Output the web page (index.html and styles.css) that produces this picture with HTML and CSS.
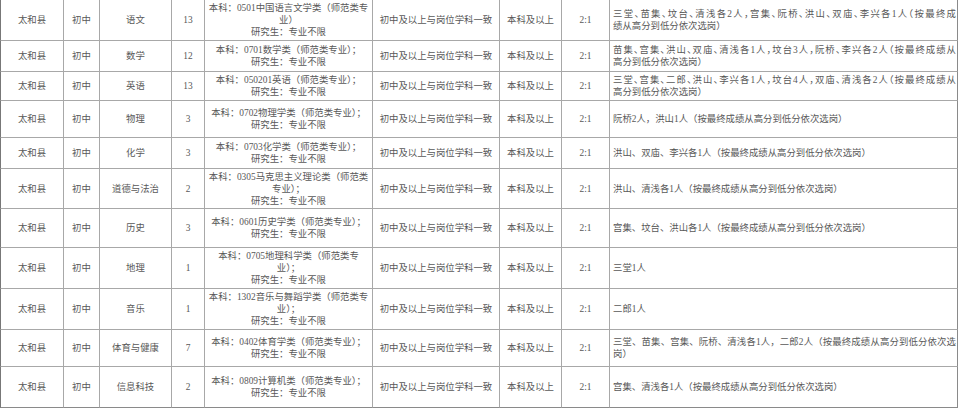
FILE: index.html
```html
<!DOCTYPE html>
<html lang="zh-CN">
<head>
<meta charset="utf-8">
<title>岗位计划表</title>
<link rel="stylesheet" href="styles.css">
</head>
<body>
<table class="roster">
  <colgroup>
    <col class="c-county">
    <col class="c-stage">
    <col class="c-subject">
    <col class="c-count">
    <col class="c-major">
    <col class="c-cert">
    <col class="c-edu">
    <col class="c-ratio">
    <col class="c-note">
  </colgroup>
  <tbody>
    <tr class="h41">
      <td>太和县</td><td>初中</td><td>语文</td><td>13</td>
      <td>本科：0501中国语言文学类（师范类专业）<br>研究生：专业不限</td>
      <td>初中及以上与岗位学科一致</td><td>本科及以上</td><td>2:1</td>
      <td><span class="line trim">三堂、苗集、坟台、清浅各2人，宫集、阮桥、洪山、双庙、李兴各1人（按最终成</span>绩从高分到低分依次选岗）</td>
    </tr>
    <tr class="h31">
      <td>太和县</td><td>初中</td><td>数学</td><td>12</td>
      <td>本科：0701数学类（师范类专业）；<br>研究生：专业不限</td>
      <td>初中及以上与岗位学科一致</td><td>本科及以上</td><td>2:1</td>
      <td><span class="line trim">苗集、宫集、洪山、双庙、清浅各1人，坟台3人，阮桥、李兴各2人（按最终成绩从</span>高分到低分依次选岗）</td>
    </tr>
    <tr class="h29">
      <td>太和县</td><td>初中</td><td>英语</td><td>13</td>
      <td>本科：050201英语（师范类专业）；<br>研究生：专业不限</td>
      <td>初中及以上与岗位学科一致</td><td>本科及以上</td><td>2:1</td>
      <td><span class="line trim">三堂、宫集、二郎、洪山、李兴各1人，坟台4人，双庙、清浅各2人（按最终成绩从</span>高分到低分依次选岗）</td>
    </tr>
    <tr class="h37">
      <td>太和县</td><td>初中</td><td>物理</td><td>3</td>
      <td>本科：0702物理学类（师范类专业）；<br>研究生：专业不限</td>
      <td>初中及以上与岗位学科一致</td><td>本科及以上</td><td>2:1</td>
      <td>阮桥2人，洪山1人（按最终成绩从高分到低分依次选岗）</td>
    </tr>
    <tr class="h31">
      <td>太和县</td><td>初中</td><td>化学</td><td>3</td>
      <td>本科：0703化学类（师范类专业）；<br>研究生：专业不限</td>
      <td>初中及以上与岗位学科一致</td><td>本科及以上</td><td>2:1</td>
      <td>洪山、双庙、李兴各1人（按最终成绩从高分到低分依次选岗）</td>
    </tr>
    <tr class="h40">
      <td>太和县</td><td>初中</td><td>道德与法治</td><td>2</td>
      <td>本科：0305马克思主义理论类（师范类专业）；<br>研究生：专业不限</td>
      <td>初中及以上与岗位学科一致</td><td>本科及以上</td><td>2:1</td>
      <td>洪山、清浅各1人（按最终成绩从高分到低分依次选岗）</td>
    </tr>
    <tr class="h39">
      <td>太和县</td><td>初中</td><td>历史</td><td>3</td>
      <td>本科：0601历史学类（师范类专业）；<br>研究生：专业不限</td>
      <td>初中及以上与岗位学科一致</td><td>本科及以上</td><td>2:1</td>
      <td>宫集、坟台、洪山各1人（按最终成绩从高分到低分依次选岗）</td>
    </tr>
    <tr class="h41">
      <td>太和县</td><td>初中</td><td>地理</td><td>1</td>
      <td>本科：0705地理科学类（师范类专业）；<br>研究生：专业不限</td>
      <td>初中及以上与岗位学科一致</td><td>本科及以上</td><td>2:1</td>
      <td>三堂1人</td>
    </tr>
    <tr class="h41">
      <td>太和县</td><td>初中</td><td>音乐</td><td>1</td>
      <td>本科：1302音乐与舞蹈学类（师范类专业）；<br>研究生：专业不限</td>
      <td>初中及以上与岗位学科一致</td><td>本科及以上</td><td>2:1</td>
      <td>二郎1人</td>
    </tr>
    <tr class="h37">
      <td>太和县</td><td>初中</td><td>体育与健康</td><td>7</td>
      <td>本科：0402体育学类（师范类专业）；<br>研究生：专业不限</td>
      <td>初中及以上与岗位学科一致</td><td>本科及以上</td><td>2:1</td>
      <td><span class="line">三堂、苗集、宫集、阮桥、清浅各1人，二郎2人（按最终成绩从高分到低分依次选</span>岗）</td>
    </tr>
    <tr class="h41">
      <td>太和县</td><td>初中</td><td>信息科技</td><td>2</td>
      <td>本科：0809计算机类（师范类专业）；<br>研究生：专业不限</td>
      <td>初中及以上与岗位学科一致</td><td>本科及以上</td><td>2:1</td>
      <td>宫集、清浅各1人（按最终成绩从高分到低分依次选岗）</td>
    </tr>
  </tbody>
</table>
</body>
</html>
```
FILE: styles.css
```css
html, body {
  margin: 0;
  padding: 0;
  background: #ffffff;
}

.roster {
  border-collapse: separate;
  border-spacing: 0;
  table-layout: fixed;
  width: 958px;
  font-family: "Liberation Serif", "Noto Sans CJK SC", serif;
  font-size: 9.4px;
  line-height: 12px;
  color: #585858;
}

.c-county { width: 64px; }
.c-stage { width: 36px; }
.c-subject { width: 72px; }
.c-count { width: 33px; }
.c-major { width: 168px; }
.c-cert { width: 127px; }
.c-edu { width: 62px; }
.c-ratio { width: 48px; }
.c-note { width: 348px; }

.roster td {
  border-right: 1px solid #a8a8a8;
  border-bottom: 1px solid #a8a8a8;
  padding: 0 2px;
  text-align: center;
  vertical-align: middle;
  overflow: hidden;
}

.roster td:first-child {
  border-left: 1px solid #777777;
}

.roster td:last-child {
  border-right-color: #8a8a8a;
  text-align: left;
  padding: 0 1px 0 3px;
}

.roster tr:last-child td {
  border-bottom-color: #8a8a8a;
}

.h29 { height: 29px; }
.h31 { height: 31px; }
.h37 { height: 37px; }
.h39 { height: 39px; }
.h40 { height: 40px; }
.h41 { height: 41px; }

.line {
  display: block;
  white-space: nowrap;
  text-align: justify;
  text-align-last: justify;
}

.trim {
  font-feature-settings: "halt";
}
```
